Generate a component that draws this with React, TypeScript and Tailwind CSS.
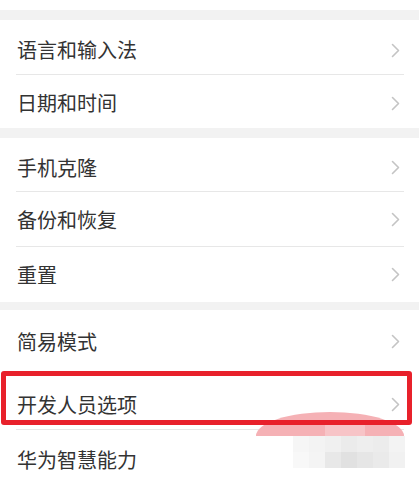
import React from "react";

const Chevron = () => (
  <svg width="9" height="15" viewBox="0 0 9 15" fill="none" className="shrink-0">
    <polyline points="1.5,1.5 7.5,7.5 1.5,13.5" stroke="#c4c4c4" strokeWidth="1.6" strokeLinecap="round" strokeLinejoin="round" />
  </svg>
);

type RowProps = { label: string; h: string; divider?: boolean; pt?: string };

const Row = ({ label, h, divider = true, pt = "" }: RowProps) => (
  <div className={`relative flex items-center pl-[17px] pr-[19px] ${h} ${pt}`}>
    <span className="flex-1 text-[20px] leading-none text-[#333333]">{label}</span>
    <Chevron />
    {divider && <div className="absolute bottom-0 left-[16px] right-[15px] h-px bg-[#e7e7e7]" />}
  </div>
);

const mosaic = [
  ["#f6f6f6", "#f3f3f3", "#f0f0f0", "#ebebeb", "#eeeeee", "#ececec", "#f3f3f3"],
  ["#f8f8f8", "#f4f4f4", "#e8e8e8", "#e1e1e1", "#e6e6e6", "#eaeaea", "#f1f1f1"],
];

export default function App() {
  return (
    <div
      className="relative w-[419px] h-[481px] overflow-hidden bg-white"
      style={{ fontFamily: '"Noto Sans CJK SC", "Noto Sans", sans-serif' }}
    >
      <div className="h-[10px] bg-white" />
      <div className="h-[10px] bg-[#f2f2f2]" />
      <Row label="语言和输入法" h="h-[55px]" pt="pt-[5px]" />
      <Row label="日期和时间" h="h-[53px]" divider={false} pt="pt-[3px]" />
      <div className="h-[10px] bg-[#f2f2f2]" />
      <Row label="手机克隆" h="h-[54px]" pt="pt-[5px]" />
      <Row label="备份和恢复" h="h-[55px]" />
      <Row label="重置" h="h-[55px]" divider={false} />
      <div className="h-[8px] bg-[#f2f2f2]" />
      <Row label="简易模式" h="h-[63px]" />
      <Row label="开发人员选项" h="h-[57px]" pt="pt-[6px]" />
      <Row label="华为智慧能力" h="h-[60px]" divider={false} />

      {/* pink dome */}
      <div className="absolute left-[256px] top-[412px] w-[148px] h-[24px] rounded-t-[74px_24px] bg-[#f5b1b5]" />
      <div className="absolute left-[325px] top-[420px] w-[40px] h-[16px] bg-[#f7c4c7]" />

      {/* mosaic */}
      <div className="absolute left-[293px] top-[436px] grid grid-cols-7">
        {mosaic.flat().map((c, i) => (
          <div key={i} className="w-[16px] h-[16px]" style={{ backgroundColor: c }} />
        ))}
      </div>

      {/* red highlight box */}
      <div className="absolute left-[1px] top-[371px] w-[411px] h-[54px] rounded-[3px] border-[5px] border-[#e8212b]" />
    </div>
  );
}
